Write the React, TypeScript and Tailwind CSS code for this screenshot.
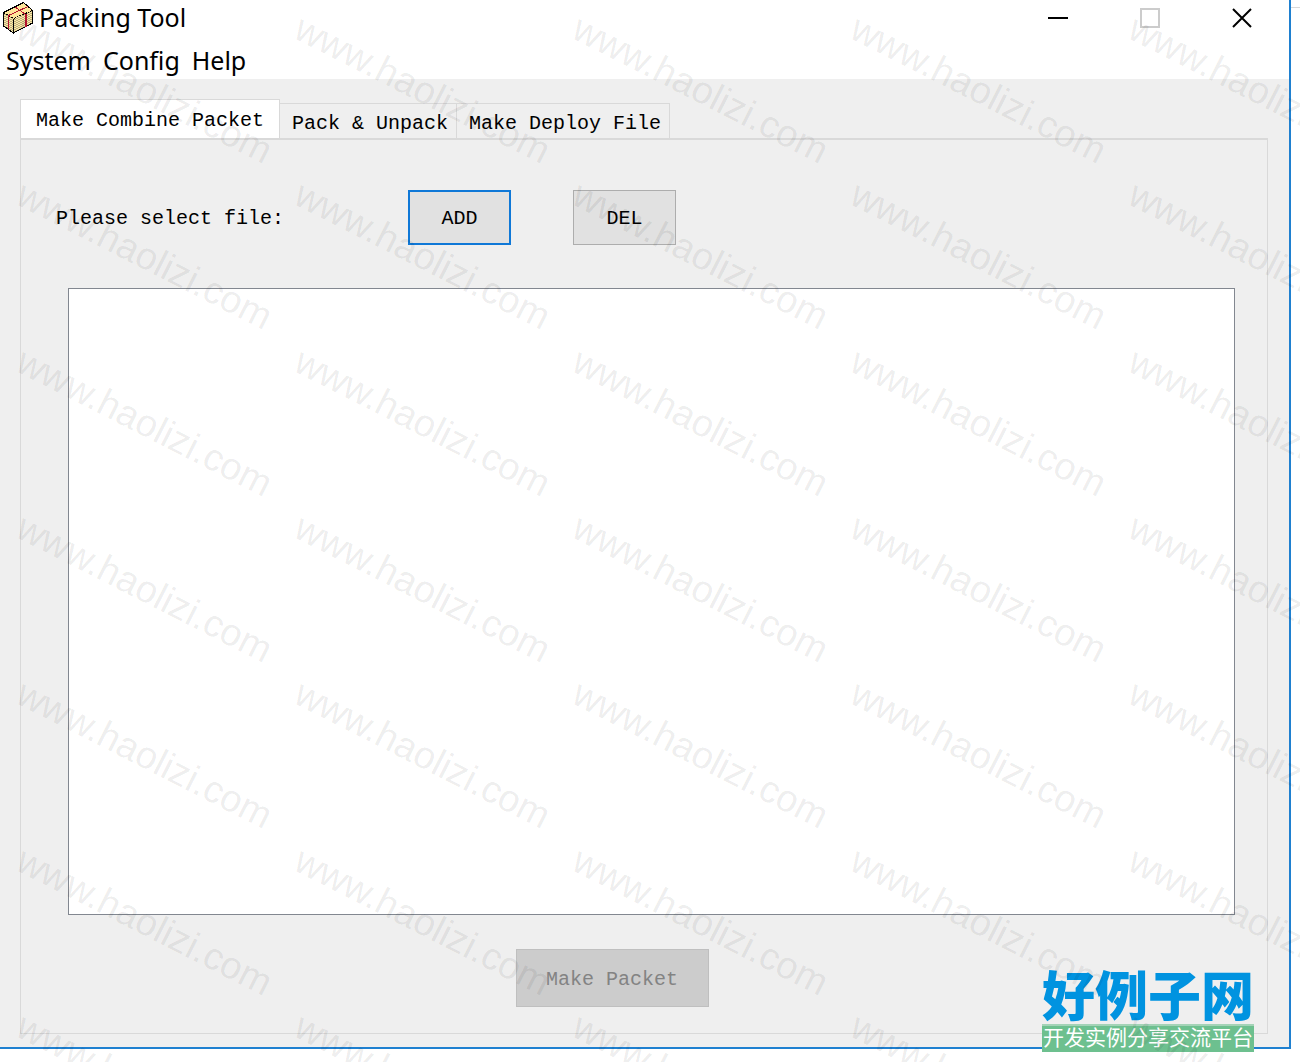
import React, { useState } from 'react';

const menus = ['System', 'Config', 'Help'];
const tabs = ['Make Combine Packet', 'Pack & Unpack', 'Make Deploy File'];

function PackageIcon() {
  return (
    <svg width="32" height="33" viewBox="2 2 32 33" shapeRendering="crispEdges" aria-hidden="true">
      <defs>
        <pattern id="weave" width="4" height="2" patternUnits="userSpaceOnUse">
          <rect width="4" height="2" fill="#fbe9a8" />
          <rect width="2" height="1" fill="#bdae7c" />
          <rect x="2" y="1" width="2" height="1" fill="#bdae7c" />
        </pattern>
      </defs>
      <path d="M3.5 12.5 23.5 2.5 32.5 10.5 13.5 18.5Z" fill="#ffe69a" />
      <path d="M3.5 12.5 13.5 18.5V33L3.5 26Z" fill="url(#weave)" />
      <path d="M13.5 18.5 32.5 10.5V23L13.5 33Z" fill="url(#weave)" />
      <path d="M3.5 12.5 23.5 2.5 32.5 10.5V23L13.5 33 3.5 26Z" fill="none" stroke="#000" />
      <path d="M13.5 18.5V33" fill="none" stroke="#000" />
      <path d="M3.5 12.5 13.5 18.5 32.5 10.5" fill="none" stroke="#000" strokeDasharray="2 1" />
      <path d="M8.5 15.5 28 6.5M15 7 25 14" fill="none" stroke="#b3122d" />
      <path d="M8 15h1v14h-1zM25 14h2v13h-2z" fill="#b3122d" />
    </svg>
  );
}

function TitleBar() {
  return (
    <div className="flex h-9 items-center bg-white pl-[2px]">
      <PackageIcon />
      <h1 className="ml-[5px] flex-1 text-[25px]">Packing Tool</h1>
      <div className="mr-px flex">
        <button aria-label="Minimize" className="flex h-9 w-[92px] items-center justify-center">
          <span className="h-[2px] w-5 bg-black" />
        </button>
        <button aria-label="Maximize" disabled className="flex h-9 w-[92px] items-center justify-center">
          <span className="size-5 border-2 border-[#cccccc]" />
        </button>
        <button aria-label="Close" className="flex h-9 w-[92px] items-center justify-center">
          <svg width="20" height="20" viewBox="0 0 20 20" aria-hidden="true">
            <path d="M1 1 19 19M19 1 1 19" stroke="#000" strokeWidth="2" />
          </svg>
        </button>
      </div>
    </div>
  );
}

function SiteLogo() {
  return (
    <div className="absolute right-[46px] bottom-[10px] w-[212px] text-center font-['Noto_Sans_CJK_SC',sans-serif]">
      <div className="h-14 text-[53px] leading-[50px] font-black whitespace-nowrap text-[#0093e0]">好例子网</div>
      <div className="h-7 border-t-2 border-[#a4d3b7] bg-[#6dc08f] text-[21px] leading-5 whitespace-nowrap text-white">
        开发实例分享交流平台
      </div>
    </div>
  );
}

function Watermark() {
  return (
    <div className="pointer-events-none absolute inset-0 overflow-hidden" aria-hidden="true">
      <div className="grid h-[1165px] w-[1390px] grid-cols-5 grid-rows-7">
        {Array.from({ length: 35 }, (_, i) => (
          <div key={i} className="flex items-center justify-center pt-3 pl-[10px]">
            <span className="rotate-[27deg] font-['Liberation_Sans',sans-serif] text-[38px] text-black/8">
              www.haolizi.com
            </span>
          </div>
        ))}
      </div>
    </div>
  );
}

export default function App() {
  const [active, setActive] = useState(0);

  return (
    <div className="relative flex min-h-screen bg-white pb-[13px] font-['Noto_Sans',sans-serif] text-black">
      <div className="flex flex-1 flex-col border-r-2 border-b-2 border-[#1f80d0]">
        <TitleBar />
        <nav className="flex h-[43px] items-center gap-3 bg-white pt-[6px] pl-[6px]">
          {menus.map((menu) => (
            <button key={menu} className="text-[25px]">
              {menu}
            </button>
          ))}
        </nav>

        <main className="flex flex-1 flex-col bg-[#efefef] pt-5 pr-[21px] pb-[13px] pl-5 font-['Liberation_Mono',monospace] text-xl">
          <div role="tablist" className="flex h-[39px] items-end">
            {tabs.map((tab, i) => (
              <button
                key={tab}
                role="tab"
                aria-selected={i === active}
                onClick={() => setActive(i)}
                className={
                  i === active
                    ? 'h-[39px] border-x border-t border-[#d9d9d9] bg-white px-[15px] pt-[3px]'
                    : 'h-[35px] border-t border-r border-[#d9d9d9] pt-[6px] pr-2 pl-3'
                }
              >
                {tab}
              </button>
            ))}
          </div>

          <div role="tabpanel" className="flex flex-1 flex-col border-x border-t-2 border-b border-[#d9d9d9] pt-[50px] pb-[26px]">
            <div className="flex items-center pl-[35px]">
              <label htmlFor="files" className="pt-[2px]">Please select file:</label>
              <button className="ml-[124px] h-[55px] w-[103px] border-2 border-[#0f78d7] bg-[#e1e1e1] pt-[3px]">ADD</button>
              <button className="ml-[62px] h-[55px] w-[103px] border border-[#adadad] bg-[#e1e1e1] pt-[3px]">DEL</button>
            </div>
            <select
              id="files"
              multiple
              className="mt-[43px] mr-8 ml-[47px] min-h-40 flex-1 appearance-none border border-[#828790] bg-white"
            />
            <div className="mt-[34px] flex justify-center pr-16">
              <button disabled className="h-[58px] w-[193px] border border-[#bfbfbf] bg-[#cccccc] pt-[3px] text-[#838383]">
                Make Packet
              </button>
            </div>
          </div>
        </main>
      </div>
      {/* edge of the window behind */}
      <div className="h-2 w-[9px] border-b border-[#d9d9d9]" />

      <SiteLogo />
      <Watermark />
    </div>
  );
}
